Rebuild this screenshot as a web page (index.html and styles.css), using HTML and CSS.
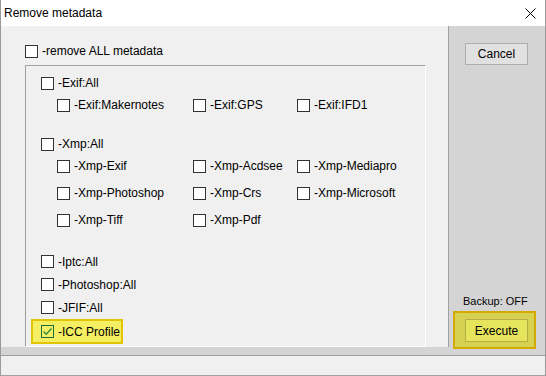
FILE: index.html
```html
<!DOCTYPE html>
<html>
<head>
<meta charset="UTF-8">
<title>Remove metadata</title>
<link rel="stylesheet" href="styles.css">
</head>
<body>
<div class="window">
  <div class="titlebar">
    <span class="title">Remove metadata</span>
    <svg class="close" width="11" height="11" viewBox="0 0 11 11"><path d="M0.5 0.5 L10.5 10.5 M10.5 0.5 L0.5 10.5" stroke="#000" stroke-width="1"/></svg>
  </div>
  <div class="body">
    <div class="main">
      <label class="row top"><span class="box"></span>-remove ALL metadata</label>
      <div class="group">
        <label class="row"><span class="box"></span>-Exif:All</label>
        <div class="sub">
          <label class="row"><span class="box"></span>-Exif:Makernotes</label>
          <label class="row"><span class="box"></span>-Exif:GPS</label>
          <label class="row"><span class="box"></span>-Exif:IFD1</label>
        </div>

        <label class="row xmp"><span class="box"></span>-Xmp:All</label>
        <div class="sub tall">
          <label class="row"><span class="box"></span>-Xmp-Exif</label>
          <label class="row"><span class="box"></span>-Xmp-Acdsee</label>
          <label class="row"><span class="box"></span>-Xmp-Mediapro</label>
          <label class="row"><span class="box"></span>-Xmp-Photoshop</label>
          <label class="row"><span class="box"></span>-Xmp-Crs</label>
          <label class="row"><span class="box"></span>-Xmp-Microsoft</label>
          <label class="row"><span class="box"></span>-Xmp-Tiff</label>
          <label class="row"><span class="box"></span>-Xmp-Pdf</label>
        </div>

        <div class="singles">
          <label class="row"><span class="box"></span>-Iptc:All</label>
          <label class="row"><span class="box"></span>-Photoshop:All</label>
          <label class="row"><span class="box"></span>-JFIF:All</label>
          <label class="row marked"><span class="box checked"><svg width="11" height="11" viewBox="0 0 11 11"><path d="M1.5 5.5 L4.2 8.2 L9.5 2.5" fill="none" stroke="#2e8b3e" stroke-width="1.3"/></svg></span>-ICC Profile</label>
        </div>
      </div>
    </div>
    <div class="side">
      <button class="btn">Cancel</button>
      <div class="bottom">
        <div class="backup">Backup: OFF</div>
        <div class="marked-btn"><button class="btn exec">Execute</button></div>
      </div>
    </div>
  </div>
  <div class="status"></div>
</div>
</body>
</html>
```

FILE: styles.css
```css
body { margin: 0; font-family: "Liberation Sans", Arial, sans-serif; font-size: 12px; color: #000; }
.window { width: 546px; height: 376px; box-sizing: border-box; border-left: 1px solid #9a9a9a; border-right: 1px solid #9a9a9a; display: flex; flex-direction: column; }
.titlebar { height: 26px; background: #fff; display: flex; align-items: center; justify-content: space-between; padding: 0 9px 1px 3px; box-sizing: border-box; }
.titlebar .close { margin-top: 2px; }
.body { height: 329px; display: flex; background: #d4d4d4; }
.main { width: 448px; height: 321px; background: #f0f0f0; border-right: 1px solid #a0a0a0; padding: 14px 0 0 24px; box-sizing: border-box; }
.side { width: 95px; display: flex; flex-direction: column; justify-content: space-between; padding: 17px 0 6px 0; box-sizing: border-box; }
.status { height: 21px; background: #f0f0f0; border-top: 1px solid #a0a0a0; border-bottom: 1px solid #a0a0a0; box-sizing: border-box; }

.row { height: 22px; display: flex; align-items: center; gap: 4px; white-space: nowrap; }
.box { width: 13px; height: 13px; box-sizing: border-box; border: 1px solid #333; background: #fff; display: inline-flex; align-items: center; justify-content: center; }
.box.checked { border-color: #1f6b3c; background: transparent; }

.group { margin-top: 3px; width: 401px; height: 282px; box-sizing: border-box; border-top: 1px solid #a0a0a0; border-left: 1px solid #a0a0a0; border-right: 1px solid #fff; border-bottom: 1px solid #fff; padding: 6px 0 0 15px; }
.sub { display: grid; grid-template-columns: 136px 104px 120px; padding-left: 16px; }
.sub.tall { row-gap: 5px; }
.row.xmp { margin-top: 17px; }
.singles { margin-top: 19px; }
.singles .row { height: 23px; }
.row.marked { height: 25px; width: 92px; margin-left: -10px; padding-left: 8px; box-sizing: border-box; border: 2px solid #e3c400; background: #f4ef62; }

.btn { font-family: "Liberation Sans", Arial, sans-serif; font-size: 12px; color: #000; width: 63px; height: 22px; margin-left: 16px; background: #e1e1e1; border: 1px solid #adadad; padding: 0; }
.bottom { display: flex; flex-direction: column; }
.backup { font-size: 11px; padding-left: 14px; height: 14px; line-height: 14px; margin-bottom: 3px; }
.marked-btn { margin-left: 4px; width: 83px; height: 38px; box-sizing: border-box; border: 2px solid #d4a900; background: #d6d150; padding: 6px 0 0 10px; }
.marked-btn .btn { margin-left: 0; height: 23px; background: #e6e35c; border-color: #b5ae44; }
```
